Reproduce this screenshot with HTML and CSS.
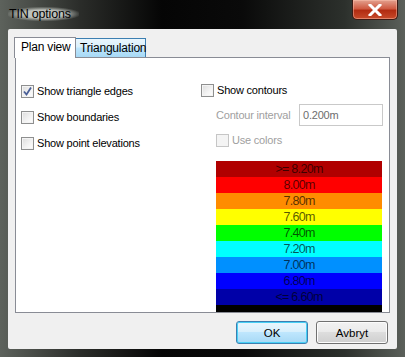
FILE: index.html
```html
<!DOCTYPE html>
<html lang="en">

<head>
    <meta charset="UTF-8">
    <title>TIN options</title>
    <link rel="stylesheet" href="styles.css">
</head>

<body>
    <div class="window">
        <div class="titlebar">
            <span class="title">TIN options</span>
            <button class="close-btn">
                <svg width="14" height="12" viewBox="0 0 14 12">
                    <path d="M2 1 L12 11 M12 1 L2 11" stroke="#fff" stroke-width="3" stroke-linecap="square"/>
                </svg>
            </button>
        </div>

        <div class="client">
            <div class="tabs">
                <div class="tab active">Plan view</div>
                <div class="tab hover">Triangulation</div>
            </div>

            <div class="panel">
                <div class="col left-col">
                    <label class="check-row">
                        <span class="box checked">
                            <svg width="11" height="11" viewBox="0 0 11 11">
                                <path d="M2 5.5 L4.5 8.5 L9 1.5" fill="none" stroke="#4a5f97" stroke-width="1.8"/>
                            </svg>
                        </span>
                        Show triangle edges
                    </label>
                    <label class="check-row"><span class="box"></span>Show boundaries</label>
                    <label class="check-row"><span class="box"></span>Show point elevations</label>
                </div>

                <div class="col right-col">
                    <label class="check-row"><span class="box"></span>Show contours</label>
                    <div class="interval-row">
                        <span class="muted">Contour interval</span>
                        <div class="textbox">0.200m</div>
                    </div>
                    <label class="check-row sub disabled"><span class="box"></span>Use colors</label>

                    <div class="legend">
                        <div class="band c1">&gt;= 8.20m</div>
                        <div class="band c2">8.00m</div>
                        <div class="band c3">7.80m</div>
                        <div class="band c4">7.60m</div>
                        <div class="band c5">7.40m</div>
                        <div class="band c6">7.20m</div>
                        <div class="band c7">7.00m</div>
                        <div class="band c8">6.80m</div>
                        <div class="band c9">&lt;= 6.60m</div>
                        <div class="band-end"></div>
                    </div>
                </div>
            </div>

            <div class="buttons">
                <button class="btn default">OK</button>
                <button class="btn">Avbryt</button>
            </div>
        </div>
    </div>
</body>

</html>
```

FILE: styles.css
```css
body {
    margin: 0;
    background-color: #000;
    font-family: "Liberation Sans", Arial, sans-serif;
    font-size: 11px;
    letter-spacing: -0.2px;
    color: #000;
    white-space: nowrap;
}

.window {
    width: 405px;
    height: 357px;
    box-sizing: border-box;
    background: linear-gradient(90deg, #5d625c 0%, #2a2c29 20%, #050505 40%, #0a0a0a 60%, #2c302c 85%, #5b605a 100%);
    display: flex;
    flex-direction: column;
}

.titlebar {
    height: 29px;
    display: flex;
    justify-content: space-between;
    align-items: flex-start;
    padding: 0 7px 0 8px;
}

.title {
    margin-top: 7px;
    padding: 0 8px 0 1px;
    font-size: 12.5px;
    background: radial-gradient(ellipse at center, rgba(210, 214, 208, 0.85) 40%, rgba(210, 214, 208, 0) 75%);
}

.close-btn {
    width: 46px;
    height: 20px;
    margin: 0;
    padding: 0;
    border: 1px solid #3d1a14;
    border-top: none;
    border-radius: 0 0 5px 5px;
    background: linear-gradient(#e3a18f 0%, #cf5b43 45%, #b22c12 55%, #c84a2a 100%);
    box-shadow: inset 0 0 0 1px rgba(255, 200, 180, 0.45);
    display: flex;
    align-items: center;
    justify-content: center;
}

.client {
    flex: 1;
    margin: 0 8px 8px 8px;
    background-color: #f0f0f0;
    border-radius: 2px;
    padding: 8px 0 0 6px;
}

.tabs {
    display: flex;
    align-items: flex-end;
    height: 20px;
}

.tab {
    border: 1px solid #898c95;
    border-bottom: none;
    box-sizing: border-box;
}

.tab.active {
    height: 21px;
    width: 62px;
    background-color: #fff;
    position: relative;
    top: 1px;
    z-index: 1;
    padding-left: 6px;
    line-height: 18px;
    font-size: 12px;
}

.tab.hover {
    width: 71px;
    height: 19px;
    margin-left: -1px;
    border-color: #3c7fb1;
    background: linear-gradient(#eaf6fd 0%, #d9f0fc 45%, #bee6fd 50%, #a7d9f5 100%);
    padding-left: 4px;
    line-height: 19px;
    font-size: 12px;
}

.panel {
    width: 375px;
    height: 256px;
    box-sizing: border-box;
    margin-left: 1px;
    border: 1px solid #898c95;
    background-color: #fff;
    display: flex;
    padding: 25px 0 0 5px;
}

.col {
    display: flex;
    flex-direction: column;
    gap: 10px;
}

.left-col {
    width: 180px;
}

.check-row {
    display: flex;
    align-items: center;
    height: 16px;
    gap: 3px;
}

.box {
    width: 11px;
    height: 11px;
    border: 1px solid #8e8f8f;
    background: linear-gradient(135deg, #dcdcdc 0%, #f4f4f4 60%, #fff 100%);
    box-shadow: inset 0 0 0 1px #f4f4f4;
    display: flex;
    align-items: center;
    justify-content: center;
}

.box.checked svg {
    display: block;
}

.sub {
    margin-left: 15px;
}

.disabled {
    color: #a0a0a0;
}

.disabled .box {
    border-color: #c6c6c6;
    background: #f4f4f4;
}

.interval-row {
    display: flex;
    align-items: center;
    margin-left: 15px;
    height: 16px;
}

.muted {
    color: #a0a0a0;
    width: 83px;
}

.textbox {
    width: 84px;
    height: 22px;
    box-sizing: border-box;
    border: 1px solid #c9c9c9;
    background-color: #fff;
    color: #6d6d6d;
    padding: 2px 3px;
    line-height: 16px;
}

.legend {
    margin: 4px 0 0 15px;
    width: 166px;
    display: flex;
    flex-direction: column;
}

.band {
    height: 16px;
    line-height: 16px;
    text-align: center;
    font-size: 12.5px;
    letter-spacing: -0.7px;
    color: rgba(0, 0, 0, 0.68);
}

.band-end {
    height: 7px;
    background-color: #000;
}

.c1 { background-color: #b00000; }
.c2 { background-color: #ff0000; }
.c3 { background-color: #ff8c00; }
.c4 { background-color: #ffff00; }
.c5 { background-color: #00ff00; }
.c6 { background-color: #00ffff; }
.c7 { background-color: #0090ff; }
.c8 { background-color: #0000ff; }
.c9 { background-color: #0000a8; }

.buttons {
    display: flex;
    justify-content: flex-end;
    gap: 8px;
    margin: 8px 9px 0 0;
}

.btn {
    width: 72px;
    height: 23px;
    padding: 0;
    border: 1px solid #707070;
    border-radius: 3px;
    background: linear-gradient(#f2f2f2 0%, #ebebeb 45%, #dddddd 50%, #cfcfcf 100%);
    box-shadow: inset 0 0 0 1px #fcfcfc;
    font-family: "Liberation Sans", Arial, sans-serif;
    font-size: 11.5px;
    color: #000;
}

.btn.default {
    border-color: #3c7fb1;
    background: linear-gradient(#eaf6fd 0%, #d9f0fc 45%, #bee6fd 50%, #a7d9f5 100%);
    box-shadow: inset 0 0 0 1px #48d0f5;
}
```
